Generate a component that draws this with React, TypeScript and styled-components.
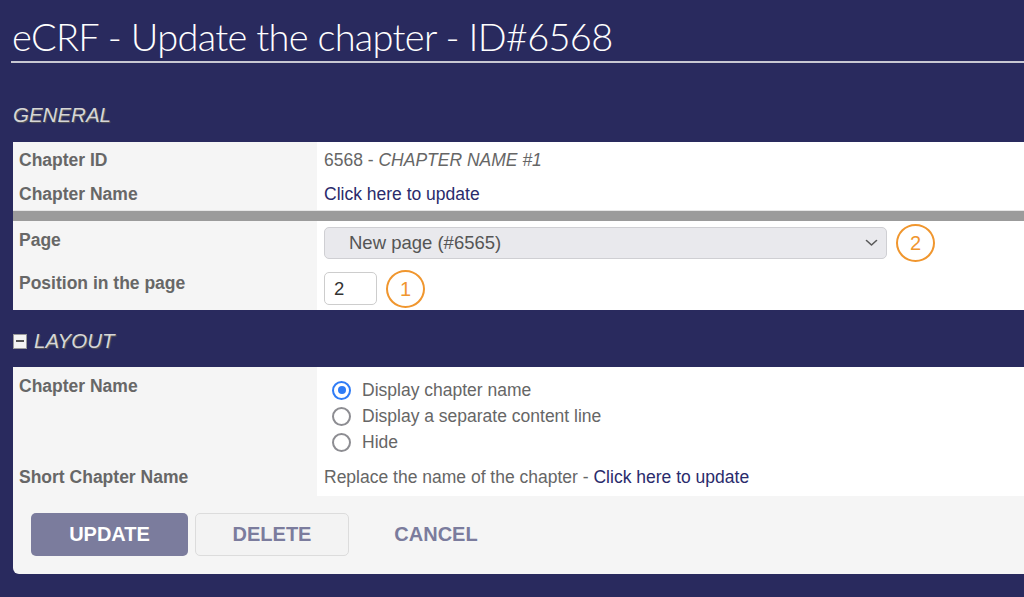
import React from "react";
import styled, { createGlobalStyle } from "styled-components";

const GlobalStyle = createGlobalStyle`
  html, body { margin: 0; padding: 0; background: #292a5e; }
  body { font-family: "Liberation Sans", Arial, sans-serif; overflow: hidden; }
  * { box-sizing: border-box; }
`;

const Page = styled.div`
  width: 1024px;
  height: 597px;
  background: #292a5e;
  overflow: hidden;
`;

const Header = styled.header`
  margin-left: 11px;
  padding: 14px 0 3px 1px;
  border-bottom: 2px solid #c8c8d2;
`;

const Title = styled.h1`
  margin: 0;
  font-family: Lato, "Liberation Sans", sans-serif;
  font-weight: 300;
  font-size: 38px;
  line-height: 44px;
  color: #ffffff;
  letter-spacing: -0.7px;
`;

const SectionTitle = styled.h2<{ $top: number; $bottom: number }>`
  margin: ${(p) => p.$top}px 0 ${(p) => p.$bottom}px 13px;
  display: flex;
  align-items: center;
  gap: 7px;
  font-family: "Liberation Sans", Arial, sans-serif;
  font-style: italic;
  font-weight: 400;
  font-size: 20.5px;
  line-height: 24px;
  color: #d6d6d6;
  text-shadow: 1px 1px 1px #5a5a5a;
`;

const ToggleBox = styled.span`
  width: 14px;
  height: 15px;
  background: #f4f4f4;
  border: 1px solid #9a9a9a;
  display: inline-flex;
  align-items: center;
  justify-content: center;
  &::after {
    content: "";
    width: 8px;
    height: 2px;
    background: #555;
  }
`;

const Table = styled.div`
  margin-left: 13px;
  background: #ffffff;
`;

const Card = styled.div`
  margin-left: 13px;
  background: #f5f5f5;
  border-bottom-left-radius: 6px;
`;

const Row = styled.div`
  display: grid;
  grid-template-columns: 304px 1fr;
`;

const Label = styled.div<{ $pt: number }>`
  background: #f5f5f5;
  padding: ${(p) => p.$pt}px 6px 0;
  font-weight: 700;
  font-size: 17.5px;
  line-height: 22px;
  color: #676767;
`;

const Value = styled.div<{ $pt: number; $pb: number }>`
  background: #ffffff;
  padding: ${(p) => p.$pt}px 7px ${(p) => p.$pb}px;
  font-size: 17.5px;
  line-height: 22px;
  color: #666666;
  display: flex;
  align-items: center;
  gap: 9px;
`;

const RadioList = styled.div`
  display: flex;
  flex-direction: column;
  padding-left: 8px;
`;

const Separator = styled.div`
  height: 11px;
  background: #9b9b9b;
  border-top: 1px solid #e6e6e6;
`;

const Italic = styled.em`
  font-style: italic;
`;

const Link = styled.a`
  color: #2a2b6c;
  text-decoration: none;
  cursor: pointer;
`;

const SelectBox = styled.div`
  width: 563px;
  height: 32px;
  border: 1px solid #cfcfd3;
  border-radius: 5px;
  background: #e9e9ed;
  display: flex;
  align-items: center;
  justify-content: space-between;
  padding: 0 8px 0 24px;
  font-size: 18.5px;
  color: #555555;
`;

const NumberInput = styled.div`
  width: 53px;
  height: 33px;
  border: 1px solid #cdcdcd;
  border-radius: 5px;
  background: #fff;
  display: flex;
  align-items: center;
  padding-left: 9px;
  font-size: 18.5px;
  color: #333;
`;

const Badge = styled.span`
  width: 39px;
  height: 38px;
  margin: -4px 0;
  border: 2.5px solid #f0962e;
  border-radius: 50%;
  display: inline-flex;
  align-items: center;
  justify-content: center;
  color: #f0962e;
  font-size: 20px;
  font-family: "Liberation Sans", Arial, sans-serif;
`;

const RadioRow = styled.label`
  display: flex;
  align-items: center;
  gap: 11px;
  height: 26px;
  font-size: 17.5px;
  color: #666;
`;

const RadioDot = styled.span<{ $checked?: boolean }>`
  width: 19px;
  height: 19px;
  border-radius: 50%;
  flex: none;
  background: #fff;
  border: 2.5px solid ${(p) => (p.$checked ? "#2f7cf6" : "#8d8d92")};
  display: inline-flex;
  align-items: center;
  justify-content: center;
  &::after {
    content: "";
    width: 8px;
    height: 8px;
    border-radius: 50%;
    background: ${(p) => (p.$checked ? "#2f7cf6" : "transparent")};
  }
`;

const ButtonBar = styled.div`
  display: flex;
  gap: 7px;
  padding: 17px 18px 18px;
`;

const Button = styled.button<{ $variant: "primary" | "secondary" | "plain"; $w: number }>`
  width: ${(p) => p.$w}px;
  height: 43px;
  border-radius: 5px;
  font-family: "Liberation Sans", Arial, sans-serif;
  font-weight: 700;
  font-size: 20px;
  cursor: pointer;
  background: ${(p) =>
    p.$variant === "primary" ? "#7b7c9d" : p.$variant === "secondary" ? "#f3f3f3" : "transparent"};
  color: ${(p) => (p.$variant === "primary" ? "#ffffff" : "#7b7c9d")};
  border: 1px solid ${(p) => (p.$variant === "secondary" ? "#dcdcdc" : "transparent")};
`;

const Chevron = () => (
  <svg width="13" height="8" viewBox="0 0 13 8" fill="none">
    <path d="M1.5 1.5 L6.5 6 L11.5 1.5" stroke="#5a5a5a" strokeWidth="1.6" strokeLinecap="round" strokeLinejoin="round" />
  </svg>
);

export default function App() {
  return (
    <Page>
      <GlobalStyle />
      <Header>
        <Title>eCRF - Update the chapter - ID#6568</Title>
      </Header>

      <SectionTitle $top={40} $bottom={15}>GENERAL</SectionTitle>
      <Table>
        <Row>
          <Label $pt={7}>Chapter ID</Label>
          <Value $pt={7} $pb={5}>
            <span>
              6568 - <Italic>CHAPTER NAME #1</Italic>
            </span>
          </Value>
        </Row>
        <Row>
          <Label $pt={7}>Chapter Name</Label>
          <Value $pt={7} $pb={5}>
            <Link>Click here to update</Link>
          </Value>
        </Row>
        <Separator />
        <Row>
          <Label $pt={8}>Page</Label>
          <Value $pt={6} $pb={6}>
            <SelectBox>
              <span>New page (#6565)</span>
              <Chevron />
            </SelectBox>
            <Badge>2</Badge>
          </Value>
        </Row>
        <Row>
          <Label $pt={7}>Position in the page</Label>
          <Value $pt={7} $pb={5}>
            <NumberInput>2</NumberInput>
            <Badge>1</Badge>
          </Value>
        </Row>
      </Table>

      <SectionTitle $top={19} $bottom={14}>
        <ToggleBox />
        LAYOUT
      </SectionTitle>
      <Card>
        <Row>
          <Label $pt={8}>Chapter Name</Label>
          <Value $pt={10} $pb={4}>
            <RadioList>
              <RadioRow>
                <RadioDot $checked />
                Display chapter name
              </RadioRow>
              <RadioRow>
                <RadioDot />
                Display a separate content line
              </RadioRow>
              <RadioRow>
                <RadioDot />
                Hide
              </RadioRow>
            </RadioList>
          </Value>
        </Row>
        <Row>
          <Label $pt={7}>Short Chapter Name</Label>
          <Value $pt={7} $pb={8}>
            <span>
              Replace the name of the chapter - <Link>Click here to update</Link>
            </span>
          </Value>
        </Row>
        <ButtonBar>
          <Button $variant="primary" $w={157}>UPDATE</Button>
          <Button $variant="secondary" $w={154}>DELETE</Button>
          <Button $variant="plain" $w={160}>CANCEL</Button>
        </ButtonBar>
      </Card>
    </Page>
  );
}
